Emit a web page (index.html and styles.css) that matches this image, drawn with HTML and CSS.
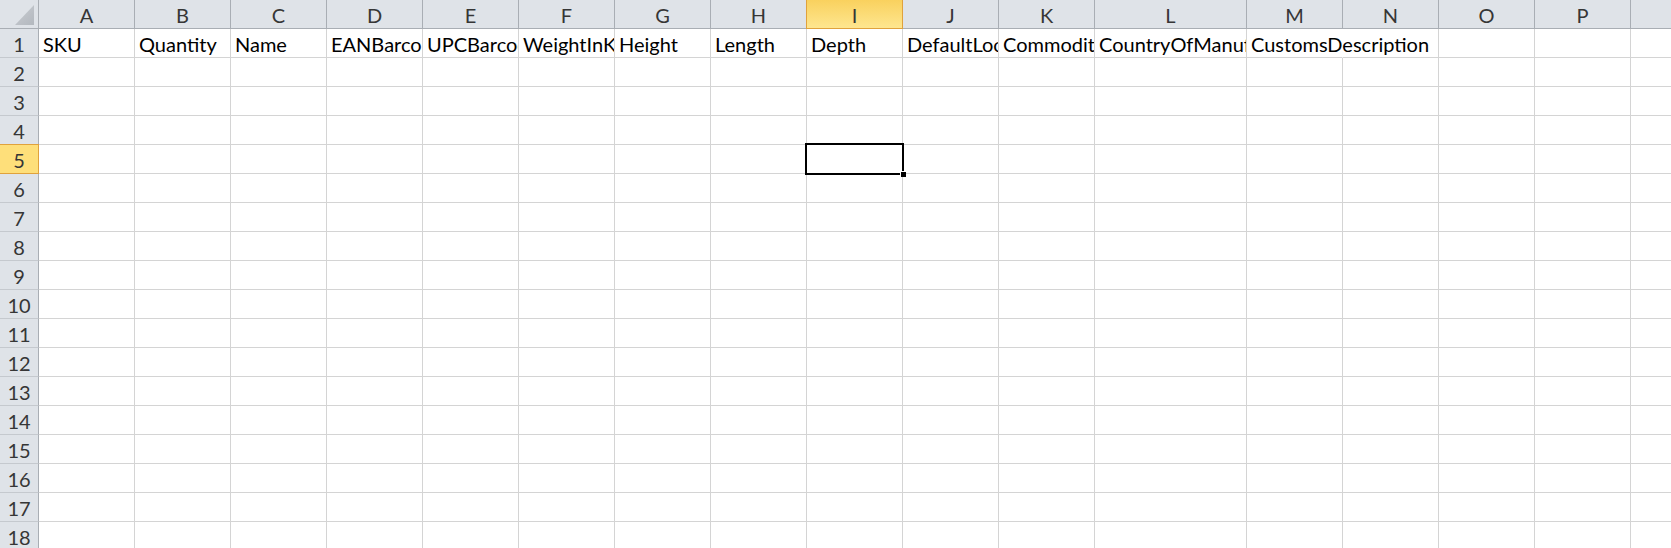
FILE: index.html
```html
<!DOCTYPE html>
<html lang="en">
<head>
    <meta charset="UTF-8">
    <meta name="viewport" content="width=device-width, initial-scale=1.0">
    <title>Product import sheet</title>
    <link rel="stylesheet" href="styles.css">
</head>
<body>
  <div id="sheet" class="sheet"></div>

  <script type="text/javascript">
    // P is the last lettered column; one more blank column fills the window edge
    const columns = "ABCDEFGHIJKLMNOP".split("").concat([""]);
    const headers = ["SKU", "Quantity", "Name", "EANBarcode", "UPCBarcode", "WeightInKg",
      "Height", "Length", "Depth", "DefaultLocation", "CommodityCode",
      "CountryOfManufacture", "CustomsDescription"];
    const rowCount = 18;
    const activeCol = "I";
    const activeRow = 5;

    buildSheet();

    function cell(cls, text){
      const div = document.createElement("div");
      div.className = cls;
      if (text) div.textContent = text;
      return div;
    }

    function buildSheet(){
      const sheet = document.getElementById("sheet");
      sheet.appendChild(cell("corner"));
      columns.forEach(c => {
        sheet.appendChild(cell("col-head" + (c === activeCol ? " active" : ""), c));
      });
      for (let r = 1; r <= rowCount; r++) {
        sheet.appendChild(cell("row-head" + (r === activeRow ? " active" : ""), String(r)));
        columns.forEach((c, i) => {
          let cls = "cell";
          let text = "";
          if (r === 1 && i < headers.length) {
            text = headers[i];
            // last header spills into the empty column next to it
            if (i === headers.length - 1) cls += " spill";
          }
          if (r === activeRow && c === activeCol) cls += " selected";
          sheet.appendChild(cell(cls, text));
        });
      }
    }
  </script>
</body>
</html>
```

FILE: styles.css
```css
body {
    margin: 0;
    background: #fff;
    font-family: 'Lato', sans-serif;
    font-size: 20px;
    color: #000;
    overflow: hidden;
}
.sheet {
    display: grid;
    grid-template-columns: 39px repeat(11, 96px) 152px repeat(5, 96px);
    grid-auto-rows: 29px;
}
.sheet > div {
    box-sizing: border-box;
    white-space: nowrap;
    line-height: 28px;
}
.corner {
    position: relative;
    background: #dfe3e8;
    border-right: 1px solid #a9aeb4;
    border-bottom: 1px solid #a9aeb4;
}
.corner::after {
    content: "";
    position: absolute;
    right: 4px;
    bottom: 3px;
    width: 19px;
    height: 20px;
    background: linear-gradient(135deg, #c9cdd2, #b3b8be);
    clip-path: polygon(100% 0, 100% 100%, 0 100%);
}
.col-head {
    background: #dfe3e8;
    color: #363636;
    text-align: center;
    border-right: 1px solid #a9aeb4;
    border-bottom: 1px solid #a9aeb4;
    padding-top: 1px;
}
.col-head.active {
    background: linear-gradient(#f9d15e, #fee68f);
    border-right-color: #e0a23c;
    border-bottom-color: #e0a23c;
    box-shadow: -1px 0 0 #e0a23c;
}
.row-head {
    background: #dfe3e8;
    color: #363636;
    text-align: center;
    border-right: 1px solid #a9aeb4;
    border-bottom: 1px solid #c5c9ce;
    padding-top: 1px;
}
.row-head.active {
    background: #fedf7a;
    border-right-color: #e0a23c;
    border-bottom-color: #e0a23c;
    box-shadow: 0 -1px 0 #e0a23c;
}
.cell {
    border-right: 1px solid #d4d4d4;
    border-bottom: 1px solid #d4d4d4;
    padding: 1px 0 0 4px;
    overflow: hidden;
}
.cell.spill {
    overflow: visible;
    border-right-color: transparent;
    position: relative;
    z-index: 1;
}
.cell.selected {
    position: relative;
    overflow: visible;
}
.cell.selected::before {
    content: "";
    position: absolute;
    left: -2px;
    top: -2px;
    right: -2px;
    bottom: -2px;
    border: 2px solid #000;
}
.cell.selected::after {
    content: "";
    position: absolute;
    right: -4px;
    bottom: -4px;
    width: 5px;
    height: 5px;
    background: #000;
    border: 1px solid #fff;
    border-width: 1px 0 0 1px;
}
```
